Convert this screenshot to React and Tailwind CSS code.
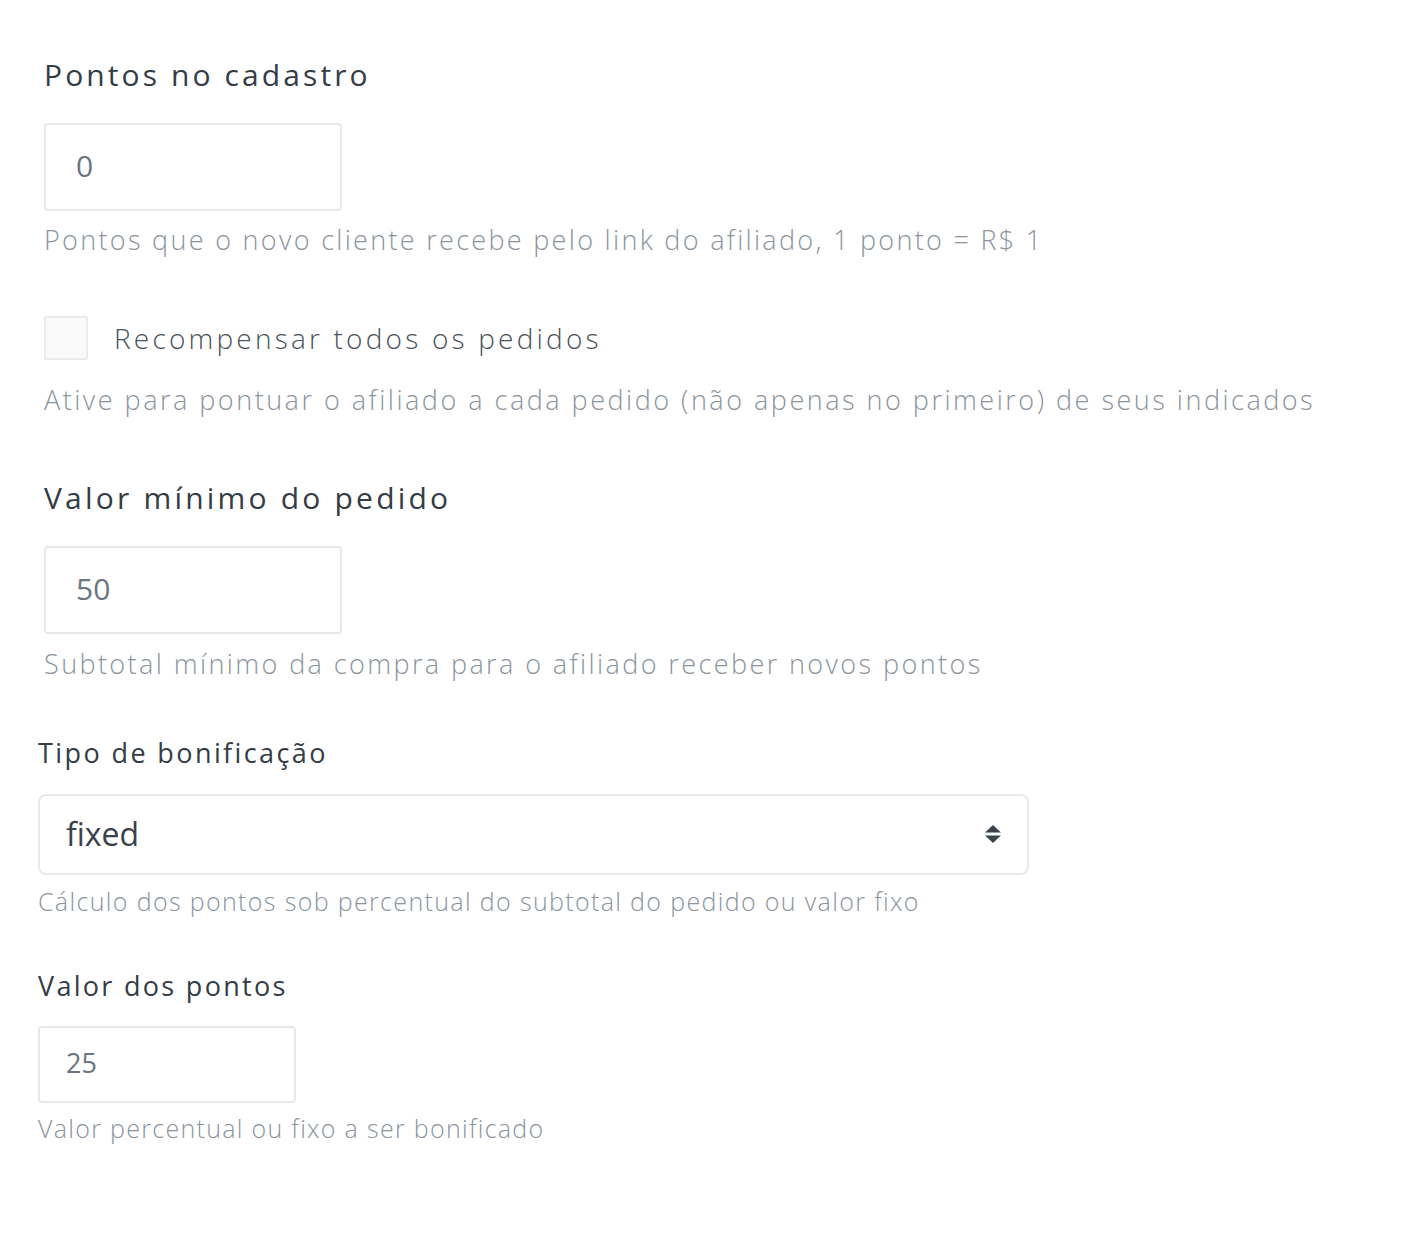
import React from "react";

const font = { fontFamily: '"Open Sans", "Noto Sans", sans-serif' };

const SortArrows = () => (
    <svg width="20" height="24" viewBox="0 0 20 24" className="text-[#3a424c]">
        <path d="M10 3 L18 10.5 L2 10.5 Z" fill="currentColor" />
        <path d="M2 13.5 L18 13.5 L10 21 Z" fill="currentColor" />
    </svg>
);

const App = () => {
    return (
        <div className="min-h-screen bg-white" style={font}>
            {/* Cadastro / pedido section */}
            <div className="flex flex-col items-start pl-[44px] pt-[55px]">
                <h2 className="text-[30px] leading-[40px] tracking-[3.1px] text-[#343c46]">
                    Pontos no cadastro
                </h2>
                <div className="mt-[28px] flex h-[88px] w-[298px] items-center rounded-[4px] border-2 border-[#e6e9ec] pb-[4px] pl-[30px] text-[30px] text-[#6b7480]">
                    0
                </div>
                <p className="mt-[11px] whitespace-nowrap text-[27px] font-light leading-[36px] tracking-[2.3px] text-[#8b949d]">
                    Pontos que o novo cliente recebe pelo link do afiliado, 1 ponto = R$ 1
                </p>

                <label className="mt-[58px] flex h-[44px] items-center gap-[26px]">
                    <span className="h-[44px] w-[44px] rounded-[2px] border-2 border-[#ebebeb] bg-[#fafafa]"></span>
                    <span className="text-[28px] font-light tracking-[3.2px] text-[#4a525b]">
                        Recompensar todos os pedidos
                    </span>
                </label>
                <p className="mt-[22px] whitespace-nowrap text-[27px] font-light leading-[36px] tracking-[2.5px] text-[#8b949d]">
                    Ative para pontuar o afiliado a cada pedido (não apenas no primeiro) de seus indicados
                </p>

                <h2 className="mt-[60px] text-[30px] leading-[40px] tracking-[3.2px] text-[#343c46]">
                    Valor mínimo do pedido
                </h2>
                <div className="mt-[28px] flex h-[88px] w-[298px] items-center rounded-[4px] border-2 border-[#e6e9ec] pb-[4px] pl-[30px] text-[30px] text-[#6b7480]">
                    50
                </div>
                <p className="mt-[12px] whitespace-nowrap text-[27px] font-light leading-[36px] tracking-[2.4px] text-[#8b949d]">
                    Subtotal mínimo da compra para o afiliado receber novos pontos
                </p>
            </div>

            {/* Bonificação section */}
            <div className="flex flex-col items-start pl-[38px]">
                <h3 className="mt-[53px] text-[27px] leading-[36px] tracking-[2.4px] text-[#343c46]">
                    Tipo de bonificação
                </h3>
                <div className="mt-[23px] flex h-[81px] w-[991px] items-center justify-between rounded-[8px] border-2 border-[#e9e9e9] pb-[2px] pl-[26px] pr-[24px]">
                    <span className="text-[32px] text-[#3a424c]">fixed</span>
                    <SortArrows />
                </div>
                <p className="mt-[10px] whitespace-nowrap text-[25px] font-light leading-[32px] tracking-[1.35px] text-[#8b949d]">
                    Cálculo dos pontos sob percentual do subtotal do pedido ou valor fixo
                </p>

                <h3 className="mt-[51px] text-[27px] leading-[36px] tracking-[2.3px] text-[#343c46]">
                    Valor dos pontos
                </h3>
                <div className="mt-[22px] flex h-[77px] w-[258px] items-center rounded-[4px] border-2 border-[#e6e9ec] pb-[2px] pl-[26px] text-[27px] text-[#6b7480]">
                    25
                </div>
                <p className="mt-[9px] whitespace-nowrap text-[25px] font-light leading-[32px] tracking-[1.3px] text-[#8b949d]">
                    Valor percentual ou fixo a ser bonificado
                </p>
            </div>
        </div>
    );
};

export default App;
